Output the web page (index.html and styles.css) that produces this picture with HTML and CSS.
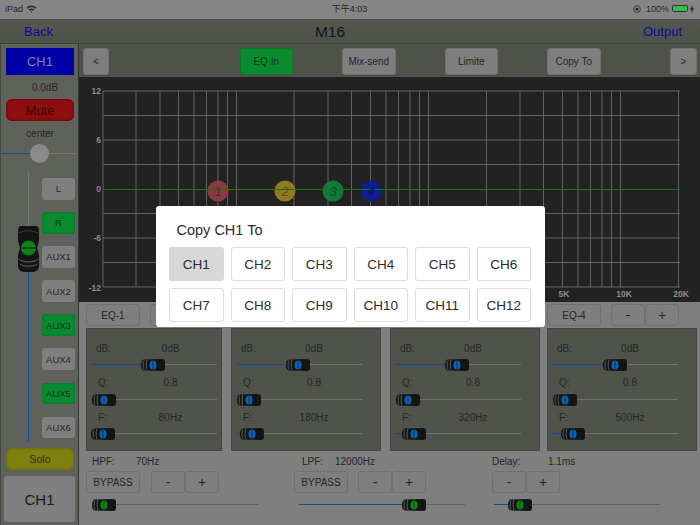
FILE: index.html
```html
<!DOCTYPE html>
<html lang="en">
<head>
<meta charset="utf-8">
<title>M16</title>
<link rel="stylesheet" href="styles.css">
</head>
<body>
<svg class="defs" width="0" height="0" aria-hidden="true">
  <symbol id="thumb-b" viewBox="0 0 24 14">
    <path d="M3 1.500 C1 1.500 0 4 0 7 C0 10 1 12.500 3 12.500 L21 13 C23 13 24 12 24 10 L24 4 C24 2 23 1 21 1 Z" fill="#141414"/>
    <path d="M3 2.500 C1.800 4 1.800 10 3 11.500 M6 2 C4.800 4 4.800 10 6 12" fill="none" stroke="#5a5a5a" stroke-width="1"/>
    <ellipse cx="12" cy="7" rx="3.500" ry="4.500" fill="#0a62bc"/>
    <rect x="11.600" y="2.500" width="0.800" height="9" fill="#10243c"/>
  </symbol>
  <symbol id="thumb-g" viewBox="0 0 24 14">
    <path d="M3 1.500 C1 1.500 0 4 0 7 C0 10 1 12.500 3 12.500 L21 13 C23 13 24 12 24 10 L24 4 C24 2 23 1 21 1 Z" fill="#141414"/>
    <path d="M3 2.500 C1.800 4 1.800 10 3 11.500 M6 2 C4.800 4 4.800 10 6 12" fill="none" stroke="#5a5a5a" stroke-width="1"/>
    <ellipse cx="12" cy="7" rx="3.500" ry="4.500" fill="#0a8a1a"/>
    <rect x="11.600" y="2.500" width="0.800" height="9" fill="#103c18"/>
  </symbol>
  <symbol id="thumb-v" viewBox="0 0 21 47">
    <path d="M3 1 L18 1 C20 1 21 3 21 6 L21 16 L19 23 L21 30 L21 41 C21 44 18 47 15 47 L6 47 C3 47 0 44 0 41 L0 30 L2 23 L0 16 L0 6 C0 3 1 1 3 1 Z" fill="#141414"/>
    <path d="M1 8 C6 5 15 5 20 8" fill="none" stroke="#3a3a3a" stroke-width="1"/>
    <path d="M0.500 34 C5 38 16 38 20.500 34 M2 39 C6 42 15 42 19 39" fill="none" stroke="#6a6a6a" stroke-width="1"/>
    <circle cx="10.500" cy="23" r="7.500" fill="#0a861a"/>
    <rect x="3" y="22.500" width="15" height="1" fill="#111"/>
  </symbol>
</svg>

<div class="app">
  <header class="status">
    <div class="status-left">
      <span>iPad</span>
      <svg class="wifi" width="11" height="8" viewBox="0 0 11 8"><path d="M0.500 2.500 C3.500 -0.300 7.500 -0.300 10.500 2.500 L9.300 3.700 C7 1.600 4 1.600 1.700 3.700 Z M2.600 4.500 C4.300 3 6.700 3 8.400 4.500 L7.200 5.700 C6.100 4.800 4.900 4.800 3.800 5.700 Z M4.600 6.500 C5.200 6.100 5.800 6.100 6.400 6.500 L5.500 7.700 Z" fill="#2e2e2e"/></svg>
    </div>
    <div class="status-time">下午4:03</div>
    <div class="status-right">
      <svg width="8" height="8" viewBox="0 0 8 8"><circle cx="4" cy="4" r="3.400" fill="none" stroke="#2e2e2e" stroke-width="0.800"/><circle cx="4" cy="4" r="1.600" fill="#2e2e2e"/></svg>
      <span class="pct">100%</span>
      <span class="battery"><span class="battery-fill"></span></span>
      <svg width="4" height="8" viewBox="0 0 4 8"><path d="M2.500 0 L0 4.500 L1.600 4.500 L1.200 8 L4 3.300 L2.300 3.300 Z" fill="#222"/></svg>
    </div>
  </header>

  <nav class="nav">
    <a class="nav-link nav-back">Back</a>
    <div class="nav-title">M16</div>
    <a class="nav-link nav-output">Output</a>
  </nav>

  <div class="workspace">
    <aside class="sidebar">
      <div class="ch-name">CH1</div>
      <div class="gain">0.0dB</div>
      <button class="side-wide mute">Mute</button>
      <div class="pan-label">center</div>
      <div class="pan"><span class="pan-fill"></span><span class="pan-knob"></span></div>
      <div class="fader-block">
        <div class="fader">
          <svg class="fader-thumb" width="21" height="47"><use href="#thumb-v"/></svg>
        </div>
        <div class="routes">
          <button class="route">L</button>
          <button class="route on">R</button>
          <button class="route">AUX1</button>
          <button class="route">AUX2</button>
          <button class="route on">AUX3</button>
          <button class="route">AUX4</button>
          <button class="route on">AUX5</button>
          <button class="route">AUX6</button>
        </div>
      </div>
      <button class="side-wide solo">Solo</button>
      <button class="ch-big">CH1</button>
    </aside>

    <main class="main">
      <div class="toolbar">
        <button class="btn arrow">&lt;</button>
        <div class="tool-group">
          <button class="btn tool on">EQ In</button>
          <button class="btn tool">Mix-send</button>
          <button class="btn tool">Limite</button>
          <button class="btn tool">Copy To</button>
        </div>
        <button class="btn arrow arrow-right">&gt;</button>
      </div>

      <svg class="graph" width="621" height="225" viewBox="79 77 621 225">
        <rect x="79" y="77" width="621" height="225" fill="#222"/>
        <path d="M103 91H680M103 115.500H680M103 140H680M103 164.500H680M103 213.500H680M103 238H680M103 262.500H680M103 287H680" stroke="#626262" stroke-width="1" fill="none"/>
        <path d="M103 91V287M136 91V287M160 91V287M178.500 91V287M194 91V287M206.500 91V287M218 91V287M227.500 91V287M236.500 91V287M294 91V287M328 91V287M351.500 91V287M370.500 91V287M386 91V287M398.500 91V287M410 91V287M419.500 91V287M428.500 91V287M486.500 91V287M520 91V287M543.500 91V287M562.500 91V287M578 91V287M590.500 91V287M602 91V287M611.500 91V287M620.500 91V287M678.500 91V287" stroke="#626262" stroke-width="1" fill="none"/>
        <g class="axis">
          <text x="101" y="94" text-anchor="end">12</text>
          <text x="101" y="143" text-anchor="end">6</text>
          <text x="101" y="192" text-anchor="end">0</text>
          <text x="101" y="241" text-anchor="end">-6</text>
          <text x="101" y="291" text-anchor="end">-12</text>
          <text x="564" y="297" text-anchor="middle">5K</text>
          <text x="624" y="297" text-anchor="middle">10K</text>
          <text x="681" y="297" text-anchor="middle">20K</text>
        </g>
        <circle cx="218" cy="191" r="10.500" fill="#8a3b40"/>
        <circle cx="285" cy="191" r="10.500" fill="#8f7b22"/>
        <circle cx="333" cy="191" r="10.500" fill="#0f7a3b"/>
        <circle cx="371" cy="191" r="10.500" fill="#101c92"/>
        <path d="M103 189.500H680" stroke="#0a7d0a" stroke-width="1"/>
        <g class="node-label">
          <text x="218" y="196" fill="#5e2327">1</text>
          <text x="285" y="196" fill="#5b4e12">2</text>
          <text x="333" y="196" fill="#074d24">3</text>
          <text x="371" y="196" fill="#08105c">4</text>
        </g>
      </svg>

      <div class="eq-tabs">
        <button class="btn tab">EQ-1</button>
        <button class="btn tab">EQ-2</button>
        <button class="btn tab">EQ-3</button>
        <button class="btn tab tab-last">EQ-4</button>
        <div class="stepper"><button class="btn step">-</button><button class="btn step">+</button></div>
      </div>

      <div class="panels">
        <section class="panel panel-first">
          <div class="head"><span class="lab lab-db">dB:</span><span class="val">0dB</span></div>
          <div class="slider" style="--v:49.6%"><svg class="thumb" width="24" height="14"><use href="#thumb-b"/></svg></div>
          <div class="head"><span class="lab">Q:</span><span class="val">0.8</span></div>
          <div class="slider" style="--v:10.3%"><svg class="thumb" width="24" height="14"><use href="#thumb-b"/></svg></div>
          <div class="head"><span class="lab">F:</span><span class="val">80Hz</span></div>
          <div class="slider" style="--v:9.5%"><svg class="thumb" width="24" height="14"><use href="#thumb-b"/></svg></div>
        </section>
        <section class="panel">
          <div class="head"><span class="lab lab-db">dB:</span><span class="val">0dB</span></div>
          <div class="slider" style="--v:49.6%"><svg class="thumb" width="24" height="14"><use href="#thumb-b"/></svg></div>
          <div class="head"><span class="lab">Q:</span><span class="val">0.8</span></div>
          <div class="slider" style="--v:10.3%"><svg class="thumb" width="24" height="14"><use href="#thumb-b"/></svg></div>
          <div class="head"><span class="lab">F:</span><span class="val">180Hz</span></div>
          <div class="slider" style="--v:13%"><svg class="thumb" width="24" height="14"><use href="#thumb-b"/></svg></div>
        </section>
        <section class="panel">
          <div class="head"><span class="lab lab-db">dB:</span><span class="val">0dB</span></div>
          <div class="slider" style="--v:49.6%"><svg class="thumb" width="24" height="14"><use href="#thumb-b"/></svg></div>
          <div class="head"><span class="lab">Q:</span><span class="val">0.8</span></div>
          <div class="slider" style="--v:10.7%"><svg class="thumb" width="24" height="14"><use href="#thumb-b"/></svg></div>
          <div class="head"><span class="lab">F:</span><span class="val">320Hz</span></div>
          <div class="slider" style="--v:14.7%"><svg class="thumb" width="24" height="14"><use href="#thumb-b"/></svg></div>
        </section>
        <section class="panel">
          <div class="head"><span class="lab lab-db">dB:</span><span class="val">0dB</span></div>
          <div class="slider" style="--v:50%"><svg class="thumb" width="24" height="14"><use href="#thumb-b"/></svg></div>
          <div class="head"><span class="lab">Q:</span><span class="val">0.8</span></div>
          <div class="slider" style="--v:10.7%"><svg class="thumb" width="24" height="14"><use href="#thumb-b"/></svg></div>
          <div class="head"><span class="lab">F:</span><span class="val">500Hz</span></div>
          <div class="slider" style="--v:17%"><svg class="thumb" width="24" height="14"><use href="#thumb-b"/></svg></div>
        </section>
      </div>

      <div class="filters">
        <section class="filter filter-hpf">
          <div class="f-head"><span class="f-lab">HPF:</span><span>70Hz</span></div>
          <div class="f-ctrl"><button class="btn tab">BYPASS</button><div class="stepper"><button class="btn step">-</button><button class="btn step">+</button></div></div>
          <div class="slider slider-long" style="--v:7%"><svg class="thumb" width="24" height="14"><use href="#thumb-g"/></svg></div>
        </section>
        <section class="filter filter-lpf">
          <div class="f-head"><span class="f-lab">LPF:</span><span>12000Hz</span></div>
          <div class="f-ctrl"><button class="btn tab">BYPASS</button><div class="stepper"><button class="btn step">-</button><button class="btn step">+</button></div></div>
          <div class="slider slider-long" style="--v:69.5%"><svg class="thumb" width="24" height="14"><use href="#thumb-g"/></svg></div>
        </section>
        <section class="filter filter-delay">
          <div class="f-head"><span class="f-lab f-lab-wide">Delay:</span><span>1.1ms</span></div>
          <div class="f-ctrl"><div class="stepper"><button class="btn step">-</button><button class="btn step">+</button></div></div>
          <div class="slider slider-long" style="--v:15.6%"><svg class="thumb" width="24" height="14"><use href="#thumb-g"/></svg></div>
        </section>
      </div>
    </main>
  </div>

  <div class="modal" role="dialog">
    <h2 class="modal-title">Copy CH1 To</h2>
    <div class="modal-grid">
      <button class="pick current">CH1</button>
      <button class="pick">CH2</button>
      <button class="pick">CH3</button>
      <button class="pick">CH4</button>
      <button class="pick">CH5</button>
      <button class="pick">CH6</button>
      <button class="pick">CH7</button>
      <button class="pick">CH8</button>
      <button class="pick">CH9</button>
      <button class="pick">CH10</button>
      <button class="pick">CH11</button>
      <button class="pick">CH12</button>
    </div>
  </div>
</div>
</body>
</html>
```

FILE: styles.css
```css
* { box-sizing: border-box; }
html, body { margin: 0; padding: 0; }
body { font-family: "Liberation Sans", Arial, sans-serif; background: #7f7f7f; color: #262626; }
button { font-family: inherit; margin: 0; padding: 0; color: inherit; cursor: pointer; }
.defs { position: absolute; }

.app { position: relative; width: 700px; height: 525px; overflow: hidden; display: flex; flex-direction: column; background: #7f7f7f; }

/* status bar */
.status { height: 19px; flex: none; background: #858585; display: grid; grid-template-columns: 1fr auto 1fr; align-items: center; padding: 0 6px 2px 5px; font-size: 9px; color: #262626; }
.status-left { display: flex; align-items: center; gap: 3px; }
.status-time { font-family: "Liberation Sans", "Noto Sans CJK SC", sans-serif; font-size: 9px; }
.status-right { display: flex; align-items: center; justify-content: flex-end; gap: 1px; }
.pct { margin-left: 4px; margin-right: 2px; }
.battery { width: 16px; height: 7px; border: 1px solid #2e2e2e; border-radius: 2px; padding: 0; display: block; margin-right: 1px; }
.battery-fill { display: block; width: 100%; height: 100%; background: #35c04a; }

/* nav */
.nav { height: 25px; flex: none; background: linear-gradient(#545750, #4f524b); border-top: 1px solid #4a4a4a; border-bottom: 1px solid #3c3f39; display: grid; grid-template-columns: 1fr auto 1fr; align-items: center; }
.nav-link { font-size: 13px; color: #0a0a9c; }
.nav-back { padding-left: 24px; }
.nav-output { justify-self: end; padding-right: 18px; }
.nav-title { font-size: 15.500px; color: #151515; margin-right: 40px; }

.workspace { flex: 1; display: flex; min-height: 0; }

/* sidebar */
.sidebar { width: 79px; flex: none; background: #5f625b; border-left: 1px solid #444740; border-right: 1px solid #33352f; padding: 4px 4px 0 5px; display: flex; flex-direction: column; }
.ch-name { height: 27px; background: #0000a6; color: #7c83a8; font-size: 13px; display: flex; align-items: center; justify-content: center; }
.gain { height: 24px; font-size: 10px; display: flex; align-items: center; justify-content: center; color: #262626; padding-left: 10px; }
.side-wide { height: 22px; flex: none; border: none; border-radius: 6px; }
.mute { background: #8c0e0e; color: #3d0606; font-size: 13px; box-shadow: inset 0 0 3px #5f0808; }
.pan-label { height: 22px; font-size: 10px; text-align: center; padding-top: 7px; color: #262626; }
.pan { position: relative; height: 20px; margin: 0 -2px 0 -4px; background: linear-gradient(#74766f, #74766f) center / 100% 1px no-repeat; }
.pan-fill { position: absolute; left: 0; top: 9.500px; width: 29px; height: 1px; background: #124a9c; }
.pan-knob { position: absolute; left: 28px; top: 0.500px; width: 19px; height: 19px; border-radius: 50%; background: #8a8a8a; }
.fader-block { height: 270px; margin-top: 9px; flex: none; display: flex; }
.fader { position: relative; width: 36px; flex: none; }
.fader::before { content: ""; position: absolute; left: 21.500px; top: 0; bottom: 0; width: 1px; background: linear-gradient(#777a73 28%, #124a9c 28%); }
.fader-thumb { position: absolute; left: 11.500px; top: 53px; }
.routes { display: flex; flex-direction: column; gap: 12.600px; padding-top: 6px; }
.route { width: 33px; height: 21.500px; border: none; border-radius: 3px; background: #7f7f7f; font-size: 9.500px; color: #262626; }
.route.on { background: #0b8b30; box-shadow: inset 0 0 3px #066a20; color: #06381a; }
.solo { margin-top: 6px; background: #7f7f12; color: #333305; font-size: 10.500px; box-shadow: inset 0 0 3px #5c5c08; }
.ch-big { margin: 6px 0 0 -2px; width: 71px; height: 46px; border: none; border-radius: 3px; background: #7f7f7f; color: #1a1a1a; font-size: 15px; }

/* main */
.main { flex: 1; min-width: 0; display: flex; flex-direction: column; }
.btn { border: 1px solid #707070; border-radius: 3px; background: #7e7e7e; font-size: 10px; color: #262626; }
.toolbar { height: 33px; flex: none; background: #4f524b; padding: 4px 3px 2px 4px; display: flex; align-items: stretch; }
.arrow { width: 26px; font-size: 10px; }
.arrow-right { margin-left: auto; width: 27px; }
.tool-group { margin-left: 130.500px; display: flex; gap: 49px; }
.tool { width: 53.500px; }
.tool.on { background: #0b8b30; border-color: #0a7a2a; color: #06381a; }
.graph { display: block; flex: none; }
.axis text { font-family: "Liberation Sans", sans-serif; font-size: 8.500px; fill: #8d8d8d; font-weight: bold; }
.node-label text { font-family: "Liberation Sans", sans-serif; font-size: 13px; font-style: italic; text-anchor: middle; }

.eq-tabs { height: 26px; flex: none; padding: 2px 0 1px 7px; display: flex; }
.tab { width: 54px; height: 22px; font-size: 10px; }
.eq-tabs .tab { margin-right: 10px; }
.eq-tabs .tab-last { margin-left: 269px; }
.stepper { display: flex; }
.step { width: 34px; height: 22px; font-size: 14px; }

.panels { height: 123px; flex: none; padding-left: 7px; display: flex; gap: 9px; }
.panels .panel:last-child { margin-left: -2px; }
.panel { width: 150px; flex: none; background: #50534b; border: 1px solid #44473f; padding-top: 10.500px; padding-left: 4px; }
.panel-first { width: 136px; }
.head { height: 16px; display: grid; grid-template-columns: 31px 94px; align-items: center; font-size: 10px; color: #262626; margin-top: 0.500px; }
.lab { margin-left: 5px; padding-left: 2px; }
.lab-db { padding-left: 0; }
.val { text-align: center; }
.panel-first .val { padding-left: 3px; }

.slider { position: relative; width: 126px; height: 18px; }
.slider::before { content: ""; position: absolute; left: 0; right: 0; top: 8px; height: 1px; background: #6f716b; }
.slider::after { content: ""; position: absolute; left: 0; top: 8px; height: 1px; width: var(--v); background: #124a9c; }
.thumb { position: absolute; z-index: 1; top: 2px; left: calc(var(--v) - 12px); }

.filters { flex: 1; display: flex; padding-left: 7px; }
.filter { flex: none; }
.filter-hpf { width: 208px; }
.filter-lpf { width: 198px; }
.f-head { height: 20px; display: flex; align-items: center; font-size: 10px; color: #262626; }
.f-lab { width: 44px; }
.f-lab-wide { width: 56px; }
.filter-hpf .f-head { padding-left: 6px; }
.filter-lpf .f-head { padding-left: 8px; }
.filter-lpf .f-lab { width: 33px; }
.f-ctrl { display: flex; gap: 10px; height: 22px; }
.filter-hpf .f-ctrl { gap: 11px; }
.slider-long { width: 166px; height: 24px; }
.slider-long::before { top: 11px; background: #5f605c; }
.slider-long::after { top: 11px; }
.slider-long .thumb { top: 5px; }
.filter-hpf .slider-long { margin-left: 6px; }
.filter-lpf .slider-long { margin-left: 5px; }
.filter-delay .slider-long { margin-left: 2px; }

/* modal */
.modal { position: absolute; left: 155.500px; top: 206px; width: 389px; height: 121px; background: #fff; border-radius: 3px; padding: 14px 13.500px 0; }
.modal-title { margin: 0 0 7px 7.500px; font-size: 14.500px; line-height: 20px; font-weight: 400; color: #2b2b2b; }
.modal-grid { display: grid; grid-template-columns: repeat(6, 54.500px); grid-auto-rows: 34px; gap: 7px; }
.pick { background: #fff; border: 1px solid #dcdcdc; border-radius: 3px; font-size: 13.500px; color: #2b2b2b; }
.pick.current { background: #d8d8d8; border-color: #d8d8d8; }
```
